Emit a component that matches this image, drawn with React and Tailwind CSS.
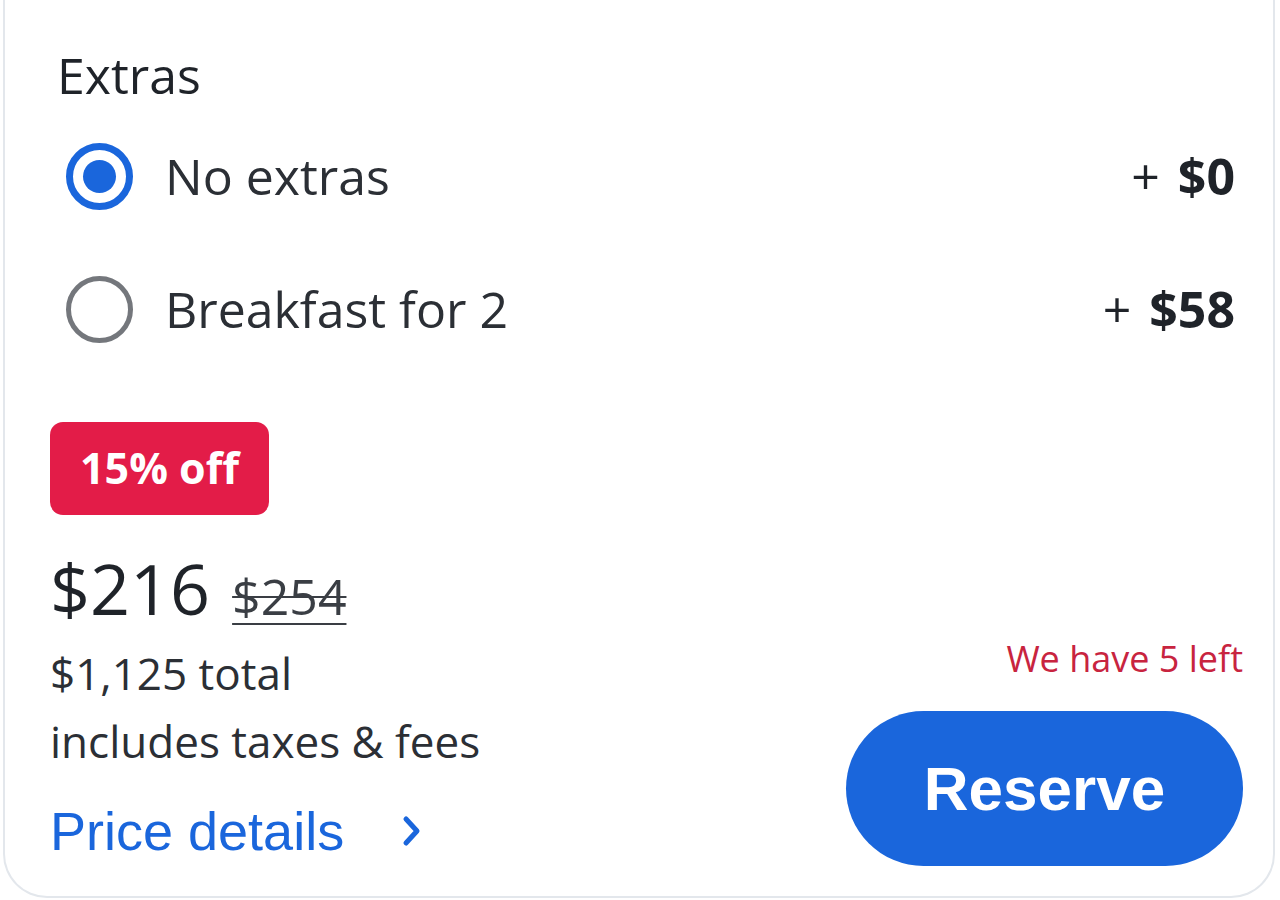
import React, { useState } from "react";

const SEGOE = { fontFamily: '"Open Sans", "Noto Sans", sans-serif' };
const ARIAL = { fontFamily: '"Liberation Sans", Arial, sans-serif' };

const Radio = ({ checked }) =>
    checked ? (
        <span className="flex h-[67px] w-[67px] shrink-0 items-center justify-center rounded-full border-[7px] border-[#1a66dc]">
            <span className="h-[33px] w-[33px] rounded-full bg-[#1a66dc]" />
        </span>
    ) : (
        <span className="h-[67px] w-[67px] shrink-0 rounded-full border-[5px] border-[#74777c]" />
    );

const options = [
    { id: "none", label: "No extras", price: "$0" },
    { id: "breakfast", label: "Breakfast for 2", price: "$58" },
];

export default function App() {
    const [selected, setSelected] = useState("none");

    return (
        <div className="h-[900px] w-[1280px] overflow-hidden bg-white pl-[3px]">
            <div
                className="flex h-[898px] w-[1272px] flex-col rounded-b-[44px] border-2 border-t-0 border-[#e3e7ec] bg-white pl-[45px] pr-[28px] text-[#1f2329]"
                style={SEGOE}
            >
                {/* Extras */}
                <div className="pl-[7px] pt-[44px] text-[50px] leading-[62px]">Extras</div>

                <div className="mt-[4px] flex flex-col">
                    {options.map((o) => (
                        <button
                            key={o.id}
                            onClick={() => setSelected(o.id)}
                            className="flex h-[133px] items-center justify-between pl-[16px] pr-[10px] text-left"
                        >
                            <span className="flex items-center gap-[32px]">
                                <Radio checked={selected === o.id} />
                                <span className="text-[50px] text-[#2b2f35]">{o.label}</span>
                            </span>
                            <span className="text-[50px] text-[#1f2329]">
                                +<span className="ml-[18px] font-bold">{o.price}</span>
                            </span>
                        </button>
                    ))}
                </div>

                {/* Price + reserve */}
                <div className="mt-[46px] flex flex-1 items-end justify-between">
                    <div className="flex flex-col pb-[33px]">
                        <span className="inline-flex h-[93px] w-[219px] items-center justify-center rounded-[13px] bg-[#e31c48] text-[43px] font-bold text-white">
                            15% off
                        </span>
                        <div className="mt-[28px] flex h-[90px] items-baseline gap-[22px]">
                            <span className="text-[70px] leading-[90px] text-[#1f2329]">$216</span>
                            <span className="text-[50px] text-[#3a3e44] [text-decoration-line:underline_line-through] [text-decoration-thickness:2px] [text-underline-offset:8px]">
                                $254
                            </span>
                        </div>
                        <span className="mt-[10px] text-[44px] leading-[60px] text-[#2b2f35]">$1,125 total</span>
                        <span className="mt-[6px] text-[44px] leading-[64px] text-[#2b2f35]">includes taxes &amp; fees</span>
                        <a
                            href="#"
                            className="mt-[25px] flex items-center gap-[58px] text-[54px] leading-[66px] text-[#1a66dc]"
                            style={ARIAL}
                        >
                            Price details
                            <svg width="20" height="32" viewBox="0 0 20 32" fill="none">
                                <path d="M4 4l11 12L4 28" stroke="#1a66dc" strokeWidth="5" strokeLinecap="round" strokeLinejoin="round" />
                            </svg>
                        </a>
                    </div>

                    <div className="mb-[31px] mr-[2px] flex flex-col items-end">
                        <span className="text-[36px] leading-[44px] text-[#c8243f]">We have 5 left</span>
                        <button
                            className="mt-[30px] h-[155px] w-[397px] rounded-full bg-[#1a66dc] text-[62px] font-bold text-white"
                            style={ARIAL}
                        >
                            Reserve
                        </button>
                    </div>
                </div>
            </div>
        </div>
    );
}
